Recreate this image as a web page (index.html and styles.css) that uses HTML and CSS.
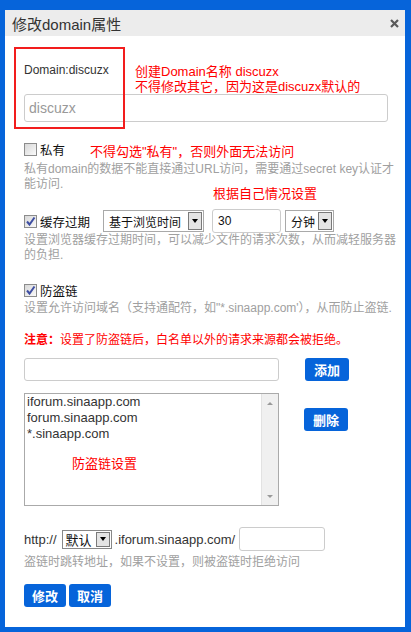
FILE: index.html
```html
<!DOCTYPE html>
<html lang="zh-CN">
<head>
	<meta charset="UTF-8">
	<title>修改domain属性</title>
	<link rel="stylesheet" href="styles.css">
</head>
<body>
	<div class="dialog">
		<div class="title">
			<span>修改domain属性</span>
			<svg class="close" width="9" height="9" viewBox="0 0 9 9"><path d="M1 1L8 8M8 1L1 8" stroke="#5a5a5a" stroke-width="2.2" fill="none"/></svg>
		</div>
		<div class="content">
			<div class="name-label">Domain:discuzx</div>
			<input class="text name-input" type="text" placeholder="discuzx">

			<div class="check-row row-private"><span class="cb"></span>私有</div>
			<p class="tip tip-private">私有domain的数据不能直接通过URL访问，需要通过secret key认证才<br>能访问.</p>

			<div class="check-row row-cache">
				<span class="cb"><svg width="11" height="11" viewBox="0 0 11 11"><path d="M2 5.5L4.5 8.5L9.5 1.5" stroke="#3f4fa3" stroke-width="2" fill="none"/></svg></span>缓存过期
				<div class="sel sel-mode"><span class="sel-text">基于浏览时间</span><span class="sel-btn"></span></div>
				<input class="text num" type="text" value="30">
				<div class="sel sel-unit"><span class="sel-text">分钟</span><span class="sel-btn"></span></div>
			</div>
			<p class="tip tip-cache">设置浏览器缓存过期时间，可以减少文件的请求次数，从而减轻服务器<br>的负担.</p>

			<div class="check-row row-hotlink">
				<span class="cb"><svg width="11" height="11" viewBox="0 0 11 11"><path d="M2 5.5L4.5 8.5L9.5 1.5" stroke="#3f4fa3" stroke-width="2" fill="none"/></svg></span>防盗链
			</div>
			<p class="tip tip-hotlink">设置允许访问域名（支持通配符，如"*.sinaapp.com'），从而防止盗链.</p>

			<div class="warn"><b>注意：</b>设置了防盗链后，白名单以外的请求来源都会被拒绝。</div>

			<div class="pair row-add">
				<input class="text add-input" type="text">
				<button class="btn btn-side">添加</button>
			</div>

			<div class="pair row-list">
				<div class="list">
					<div class="items">
						<div>iforum.sinaapp.com</div>
						<div>forum.sinaapp.com</div>
						<div>*.sinaapp.com</div>
					</div>
					<div class="scroll"><span class="up"></span><span class="down"></span></div>
				</div>
				<button class="btn btn-side btn-del">删除</button>
			</div>

			<div class="row-http">
				<span>http://</span>
				<div class="sel sel-sub"><span class="sel-text">默认</span><span class="sel-btn"></span></div>
				<span>.iforum.sinaapp.com/</span>
				<input class="text jump" type="text">
			</div>
			<p class="tip tip-jump">盗链时跳转地址，如果不设置，则被盗链时拒绝访问</p>

			<div class="actions">
				<button class="btn">修改</button>
				<button class="btn">取消</button>
			</div>
		</div>

		<!-- annotations drawn over the screenshot -->
		<div class="mark-box"></div>
		<div class="note note-name">创建Domain名称 discuzx<br>不得修改其它，因为这是discuzx默认的</div>
		<div class="note note-private">不得勾选"私有"，否则外面无法访问</div>
		<div class="note note-cache">根据自己情况设置</div>
		<div class="note note-list">防盗链设置</div>
	</div>
</body>
</html>
```

FILE: styles.css
```css
body {
	margin: 0;
	padding: 10px 6px 5px 5px;
	background-color: #0664da;
	font-family: "Liberation Sans", "Noto Sans CJK SC", sans-serif;
	color: #222;
}

.dialog {
	position: relative;
	width: 400px;
	height: 617px;
	overflow: hidden;
	background-color: #fff;
}

.title {
	display: flex;
	height: 26px;
	padding: 0 6px 0 7px;
	justify-content: space-between;
	align-items: center;
	background-color: #ececec;
	font-size: 15px;
	color: #333;
}

.content {
	padding-left: 19px;
}

.name-label {
	margin-top: 26px;
	height: 16px;
	line-height: 16px;
	font-size: 12px;
	color: #333;
}

.text {
	box-sizing: border-box;
	border: 1px solid #ccc;
	border-radius: 3px;
	font-family: inherit;
	font-size: 12px;
	padding: 0 5px;
	outline: none;
	display: block;
}

.name-input {
	margin-top: 16px;
	width: 364px;
	height: 28px;
	font-size: 14px;
	padding-left: 4px;
}

.name-input::placeholder {
	color: #999;
}

.check-row {
	display: flex;
	align-items: center;
	font-size: 12.5px;
	color: #111;
}

.cb {
	display: flex;
	box-sizing: border-box;
	width: 13px;
	height: 13px;
	margin-right: 3px;
	border: 1px solid #8c8c8c;
	background: linear-gradient(135deg, #d8d8d8, #fafafa);
	align-items: center;
	justify-content: center;
}

.row-private {
	margin-top: 18px;
	height: 18px;
}

.tip {
	margin: 0;
	font-size: 12px;
	line-height: 15px;
	color: #a0a0a0;
	white-space: nowrap;
}

.tip-private {
	margin-top: 4px;
}

.row-cache {
	margin-top: 17px;
	height: 24px;
}

.sel {
	display: flex;
	box-sizing: border-box;
	height: 22px;
	border: 1px solid #a9a9a9;
	background-color: #fff;
	align-items: center;
	font-size: 12px;
	color: #111;
}

.sel-text {
	flex: 1;
	padding-left: 5px;
}

.sel-btn {
	display: flex;
	box-sizing: border-box;
	width: 14px;
	height: 18px;
	margin-right: 1px;
	border: 1px solid #7a7a7a;
	background-color: #e4e4e4;
	align-items: center;
	justify-content: center;
}

.sel-btn::after {
	content: "";
	border-left: 3.5px solid transparent;
	border-right: 3.5px solid transparent;
	border-top: 4px solid #000;
}

.sel-mode {
	width: 101px;
	margin-left: 13px;
}

.num {
	width: 69px;
	height: 24px;
	margin-left: 8px;
	color: #111;
}

.sel-unit {
	width: 49px;
	margin-left: 4px;
}

.row-hotlink {
	margin-top: 18px;
	height: 18px;
}

.tip-hotlink {
	margin-top: 2px;
}

.warn {
	margin-top: 16px;
	height: 16px;
	line-height: 16px;
	font-size: 12px;
	color: #f00;
}

.pair {
	display: flex;
	align-items: flex-start;
}

.row-add {
	margin-top: 10px;
}

.add-input {
	width: 255px;
	height: 23px;
}

.btn {
	height: 23px;
	width: 42px;
	padding: 0;
	border: none;
	border-radius: 3px;
	background-color: #0664da;
	color: #fff;
	font-family: inherit;
	font-size: 13px;
	font-weight: bold;
}

.btn-side {
	width: 44px;
	margin-left: 26px;
}

.row-list {
	margin-top: 12px;
}

.list {
	display: flex;
	box-sizing: border-box;
	width: 255px;
	height: 113px;
	border: 1px solid #aaa;
}

.items {
	flex: 1;
	padding-left: 2px;
	font-size: 13px;
	line-height: 16px;
	color: #333;
}

.scroll {
	display: flex;
	width: 16px;
	border-left: 1px solid #e2e2e2;
	background-color: #f0f0f0;
	flex-direction: column;
	justify-content: space-between;
	align-items: center;
	padding: 8px 0 7px;
}

.up {
	border-left: 3.5px solid transparent;
	border-right: 3.5px solid transparent;
	border-bottom: 3px solid #999;
}

.down {
	border-left: 3.5px solid transparent;
	border-right: 3.5px solid transparent;
	border-top: 3px solid #999;
}

.btn-del {
	margin-top: 15px;
	margin-left: 25px;
}

.row-http {
	display: flex;
	margin-top: 21px;
	height: 24px;
	align-items: center;
	font-size: 13px;
	color: #333;
}

.sel-sub {
	width: 50px;
	height: 19px;
	margin: 0 3px 0 5px;
	font-size: 13px;
	border-color: #888;
}

.sel-sub .sel-text {
	padding-left: 3px;
}

.sel-sub .sel-btn {
	height: 15px;
}

.jump {
	width: 86px;
	height: 24px;
	margin-left: 4px;
}

.tip-jump {
	margin-top: 4px;
}

.actions {
	display: flex;
	margin-top: 14px;
	gap: 3px;
}

.mark-box {
	position: absolute;
	left: 9px;
	top: 37px;
	width: 111px;
	height: 82px;
	box-sizing: border-box;
	border: 2px solid #f21d1d;
}

.note {
	position: absolute;
	font-size: 13px;
	line-height: 15px;
	color: #f00;
	white-space: nowrap;
}

.note-name {
	left: 130px;
	top: 54px;
}

.note-private {
	left: 85px;
	top: 134px;
}

.note-cache {
	left: 208px;
	top: 176px;
}

.note-list {
	left: 67px;
	top: 446px;
}
```
